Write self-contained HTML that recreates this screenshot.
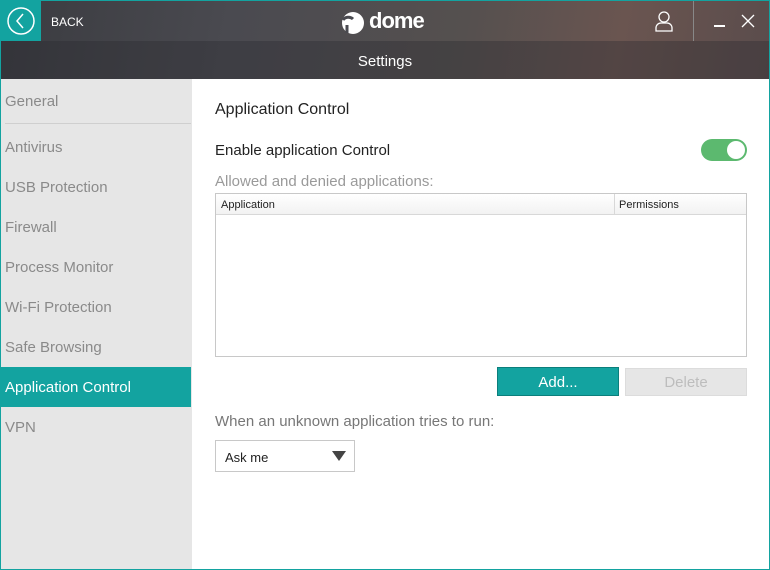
<!DOCTYPE html>
<html><head><meta charset="utf-8"><style>
*{margin:0;padding:0;box-sizing:border-box}
body{width:770px;height:570px;overflow:hidden;font-family:"Liberation Sans",sans-serif;background:#fff;position:relative}
.win{position:absolute;left:0;top:0;width:770px;height:570px;border:1px solid #13a3a0}
.hdr{position:absolute;left:0;top:0;width:770px;height:79px;background:linear-gradient(100deg,#3a3b40 0%,#4a4a50 30%,#55504f 60%,#6a5550 80%,#5a4c4c 100%)}
.sub{position:absolute;left:1px;top:41px;width:768px;height:38px;background:rgba(40,40,45,.35)}
.back{position:absolute;left:1px;top:1px;width:40px;height:40px;background:#13a3a0}
.txt{position:absolute;color:#fff}
.side{position:absolute;left:1px;top:79px;width:191px;height:490px;background:#e6e6e6}
.side div{position:absolute;left:4px;font-size:15px;color:#8a8a8a}
.sel{position:absolute;left:1px;top:367px;width:190px;height:40px;background:#13a3a0}
.content{position:absolute;left:215px}
</style></head><body>
<div class="hdr"></div><div class="sub"></div>
<div class="back"><svg width="40" height="40"><circle cx="20" cy="20" r="13" fill="none" stroke="#fff" stroke-width="1.5"/><path d="M22 13 L16 20 L22 27" fill="none" stroke="#fff" stroke-width="1.5"/></svg></div>
<div class="txt" style="left:51px;top:15px;font-size:12px">BACK</div>
<svg style="position:absolute;left:339px;top:10px" width="28" height="26"><circle cx="14" cy="13" r="11" fill="#fff"/><path d="M4 10 a6 5 0 0 1 10 -1 M8 15 v8" stroke="#4a4a50" stroke-width="3" fill="none"/></svg>
<div class="txt" style="left:369px;top:8px;font-size:22px;font-weight:bold;letter-spacing:-1px">dome</div>
<svg style="position:absolute;left:653px;top:10px" width="22" height="22"><circle cx="11" cy="7" r="5" fill="none" stroke="#fff" stroke-width="1.3"/><path d="M3 21 v-3 a5 5 0 0 1 5 -5 h6 a5 5 0 0 1 5 5 v3 z" fill="none" stroke="#fff" stroke-width="1.3"/></svg>
<div style="position:absolute;left:693px;top:1px;width:1px;height:40px;background:#888"></div>
<div style="position:absolute;left:714px;top:25px;width:11px;height:1.5px;background:#fff"></div>
<svg style="position:absolute;left:741px;top:14px" width="14" height="14"><path d="M1 1 L13 13 M13 1 L1 13" stroke="#fff" stroke-width="1.3"/></svg>
<div class="txt" style="left:0;width:770px;text-align:center;top:53px;font-size:15px">Settings</div>
<div class="side">
<div style="top:14px">General</div>
<div style="left:4px;top:44px;width:186px;height:1px;background:#cfcfcf"></div>
<div style="top:60px">Antivirus</div>
<div style="top:100px">USB Protection</div>
<div style="top:140px">Firewall</div>
<div style="top:180px">Process Monitor</div>
<div style="top:220px">Wi-Fi Protection</div>
<div style="top:260px">Safe Browsing</div>
<div style="top:340px">VPN</div>
</div>
<div class="sel"></div>
<div class="txt" style="left:5px;top:379px;font-size:15px">Application Control</div>
<div class="content" style="top:101px;font-size:16px;color:#222">Application Control</div>
<div class="content" style="top:142px;font-size:15px;color:#222">Enable application Control</div>
<div style="position:absolute;left:701px;top:139px;width:46px;height:22px;border-radius:11px;background:#5cb96f"></div>
<div style="position:absolute;left:727px;top:141px;width:18px;height:18px;border-radius:9px;background:#fff"></div>
<div class="content" style="top:173px;font-size:15px;color:#9a9a9a">Allowed and denied applications:</div>
<div style="position:absolute;left:215px;top:193px;width:532px;height:164px;border:1px solid #c8c8c8;background:#fff">
<div style="height:21px;border-bottom:1px solid #d8d8d8;background:linear-gradient(#fff,#f2f2f2);font-size:11px;color:#222;position:relative">
<span style="position:absolute;left:5px;top:5px">Application</span>
<div style="position:absolute;left:398px;top:0;width:1px;height:20px;background:#d8d8d8"></div>
<span style="position:absolute;left:403px;top:5px">Permissions</span></div></div>
<div style="position:absolute;left:497px;top:367px;width:122px;height:29px;background:#13a3a0;border:1px solid #0b7f7c;color:#fff;font-size:15px;text-align:center;line-height:29px">Add...</div>
<div style="position:absolute;left:625px;top:368px;width:122px;height:28px;background:#e6e6e6;border:1px solid #dcdcdc;color:#bdbdbd;font-size:15px;text-align:center;line-height:28px">Delete</div>
<div class="content" style="top:413px;font-size:15px;color:#777">When an unknown application tries to run:</div>
<div style="position:absolute;left:215px;top:440px;width:140px;height:32px;border:1px solid #c8c8c8;font-size:13px;color:#222;padding:9px 0 0 9px">Ask me
<svg style="position:absolute;left:116px;top:10px" width="14" height="10"><path d="M0 0 H14 L7 10 Z" fill="#444"/></svg></div>
<div class="win"></div>
</body></html>
